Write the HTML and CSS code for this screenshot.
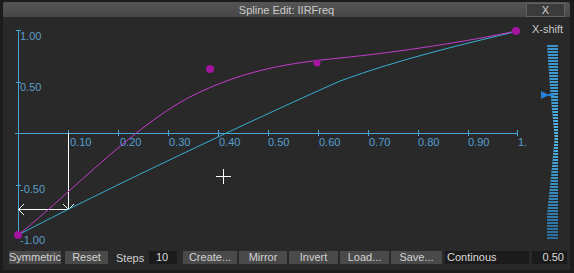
FILE: index.html
```html
<!DOCTYPE html>
<html lang="en">
  <head>
    <meta charset="utf-8">
    <title>Spline Edit: IIRFreq</title>
    <link rel="stylesheet" href="styles.css">
  </head>
  <body>
    <div class="window">
      <div class="titlebar">
        <span class="title">Spline Edit: IIRFreq</span>
        <button class="close_btn">X</button>
      </div>

      <div class="main">
        <svg class="plot" width="528" height="232" viewBox="3 18 528 232">
          <!-- axes -->
          <g class="axis">
            <line x1="18.5" y1="31" x2="18.5" y2="238"/>
            <line x1="15" y1="134.5" x2="518" y2="134.5"/>
            <line x1="16" y1="31.5" x2="21" y2="31.5"/>
            <line x1="16" y1="83.5" x2="21" y2="83.5"/>
            <line x1="16" y1="186.5" x2="21" y2="186.5"/>
            <line x1="68.5" y1="131" x2="68.5" y2="137"/>
            <line x1="118.5" y1="131" x2="118.5" y2="137"/>
            <line x1="168.5" y1="131" x2="168.5" y2="137"/>
            <line x1="218.5" y1="131" x2="218.5" y2="137"/>
            <line x1="268.5" y1="131" x2="268.5" y2="137"/>
            <line x1="318.5" y1="131" x2="318.5" y2="137"/>
            <line x1="368.5" y1="131" x2="368.5" y2="137"/>
            <line x1="418.5" y1="131" x2="418.5" y2="137"/>
            <line x1="468.5" y1="131" x2="468.5" y2="137"/>
            <line x1="517.5" y1="131" x2="517.5" y2="137"/>
          </g>

          <!-- axis labels -->
          <g class="label_bg">
            <rect x="69" y="138" width="23" height="11"/>
            <rect x="119" y="138" width="23" height="11"/>
            <rect x="168" y="138" width="23" height="11"/>
            <rect x="218" y="138" width="23" height="11"/>
            <rect x="267" y="138" width="23" height="11"/>
            <rect x="318" y="138" width="23" height="11"/>
            <rect x="368" y="138" width="23" height="11"/>
            <rect x="417" y="138" width="23" height="11"/>
            <rect x="467" y="138" width="23" height="11"/>
          </g>
          <g class="tick_label">
            <text x="20" y="41">1.00</text>
            <text x="20" y="92">0.50</text>
            <text x="20" y="194">-0.50</text>
            <text x="20" y="245">-1.00</text>
            <text x="70" y="147">0.10</text>
            <text x="120" y="147">0.20</text>
            <text x="169" y="147">0.30</text>
            <text x="219" y="147">0.40</text>
            <text x="268" y="147">0.50</text>
            <text x="319" y="147">0.60</text>
            <text x="369" y="147">0.70</text>
            <text x="418" y="147">0.80</text>
            <text x="468" y="147">0.90</text>
            <text x="518" y="147">1.</text>
          </g>

          <!-- step marker -->
          <g class="marker">
            <line x1="68.5" y1="134" x2="68.5" y2="210.5"/>
            <line x1="18" y1="210.5" x2="68.5" y2="210.5"/>
            <polyline points="24,205 18.5,210.5 24,216"/>
            <polyline points="63,205 68.5,210.5 74,205"/>
          </g>

          <!-- curves -->
          <path class="curve_linear" d="M18,236 C100,193 250,122 340,82 C400,60 460,46 518,32"/>
          <path class="curve_spline" d="M18,236 C70,195 140,120 200,93 C250,70 290,64 340,59 C400,53 470,42 516,32"/>
          <g class="knot">
            <circle cx="18" cy="236" r="4"/>
            <circle cx="210" cy="70" r="4"/>
            <circle cx="317" cy="64" r="3.5"/>
            <circle cx="516" cy="32" r="4"/>
          </g>

          <!-- mouse cursor -->
          <g class="cursor">
            <line x1="216" y1="177.5" x2="231" y2="177.5"/>
            <line x1="223.5" y1="170" x2="223.5" y2="185"/>
          </g>
        </svg>

        <div class="shift_panel">
          <div class="shift_label">X-shift</div>
          <div class="shift_track">
            <div class="shift_bar"></div>
            <div class="shift_handle"></div>
          </div>
        </div>
      </div>

      <div class="toolbar">
        <button class="tool_btn btn_sym">Symmetric</button>
        <button class="tool_btn btn_reset">Reset</button>
        <span class="steps_label">Steps</span>
        <span class="field field_steps">10</span>
        <button class="tool_btn btn_create">Create...</button>
        <button class="tool_btn btn_mirror">Mirror</button>
        <button class="tool_btn btn_invert">Invert</button>
        <button class="tool_btn btn_load">Load...</button>
        <button class="tool_btn btn_save">Save...</button>
        <span class="field field_mode">Continous</span>
        <span class="field field_value">0.50</span>
      </div>
    </div>
  </body>
</html>
```

FILE: styles.css
```css
html {
  font-family: "Liberation Sans", Arial, sans-serif;
}

body {
  margin: 0;
  background-color: #1c1c1c;
  font-size: 11px;
  color: #cfcfcf;
}

.window {
  width: 567px;
  height: 268px;
  margin: 2px 0 0 3px;
  background-color: #292929;
  display: flex;
  flex-direction: column;
}

.titlebar {
  height: 16px;
  position: relative;
  display: flex;
  align-items: center;
  justify-content: center;
  background: linear-gradient(#555555, #474747);
  border-radius: 3px 3px 0 0;
}

.title {
  color: #cccccc;
  font-size: 11px;
}

.close_btn {
  position: absolute;
  left: 523px;
  top: 1px;
  width: 39px;
  height: 14px;
  padding: 0;
  border: 1px solid #626262;
  background-color: #3b3b3b;
  color: #d0d0d0;
  font-family: inherit;
  font-size: 11px;
}

.main {
  height: 232px;
  display: flex;
}

.plot {
  display: block;
  flex: none;
}

.axis line {
  stroke: #4aa6d6;
  stroke-width: 1;
}

.label_bg rect {
  fill: #262b30;
}

.tick_label text {
  fill: #5c9dc6;
  font-size: 11px;
  font-family: "Liberation Sans", Arial, sans-serif;
}

.marker line,
.marker polyline {
  stroke: #ffffff;
  stroke-width: 1;
  fill: none;
}

.curve_linear {
  fill: none;
  stroke: #38aed2;
  stroke-width: 1;
}

.curve_spline {
  fill: none;
  stroke: #c23ccc;
  stroke-width: 1;
}

.knot circle {
  fill: #a3159e;
}

.cursor line {
  stroke: #ffffff;
  stroke-width: 1;
}

.shift_panel {
  width: 39px;
  display: flex;
  flex-direction: column;
}

.shift_label {
  padding: 6px 0 0 1px;
  height: 15px;
  color: #c8c8c8;
  font-size: 11px;
}

.shift_track {
  position: relative;
  margin: 6px 0 0 16px;
  width: 11px;
  height: 195px;
}

.shift_bar {
  width: 11px;
  height: 195px;
  background:
    repeating-linear-gradient(#292929 0 1px, transparent 1px 3px),
    linear-gradient(#3b92cc, #3f9fd6 30%, #55b9e6 48%, #3d98cc 65%, #2b6c9c);
  clip-path: polygon(0 0, 100% 0, 100% 100%, 0 100%, 0 88%, 40% 66%, 70% 48%, 30% 24%);
}

.shift_handle {
  position: absolute;
  left: -6px;
  top: 47px;
  width: 0;
  height: 0;
  border-top: 4px solid transparent;
  border-bottom: 4px solid transparent;
  border-left: 8px solid #2582dc;
}

.shift_handle::after {
  content: "";
  position: absolute;
  left: -1px;
  top: -1px;
  width: 6px;
  height: 2px;
  background-color: #2582dc;
}

.toolbar {
  height: 20px;
  display: flex;
  align-items: flex-start;
  padding: 2px 0 0 6px;
}

.tool_btn {
  height: 13px;
  padding: 0;
  border: none;
  background-color: #4a4a4a;
  color: #d2d2d2;
  font-family: inherit;
  font-size: 11px;
  line-height: 13px;
  margin-right: 2px;
}

.btn_sym { width: 52px; margin-right: 4px; }
.btn_reset { width: 43px; }
.btn_create { width: 54px; }
.btn_mirror { width: 48px; }
.btn_invert { width: 49px; }
.btn_load { width: 49px; }
.btn_save { width: 51px; margin-right: 3px; }

.steps_label {
  width: 33px;
  padding-left: 6px;
  line-height: 14px;
  color: #cfcfcf;
}

.field {
  height: 13px;
  line-height: 13px;
  background-color: #1b1b1b;
  color: #dcdcdc;
  box-sizing: border-box;
}

.field_steps {
  width: 28px;
  margin-right: 6px;
  padding-left: 7px;
}

.field_mode {
  width: 84px;
  margin-right: 3px;
  padding-left: 2px;
}

.field_value {
  width: 35px;
  text-align: right;
  padding-right: 3px;
}
```
